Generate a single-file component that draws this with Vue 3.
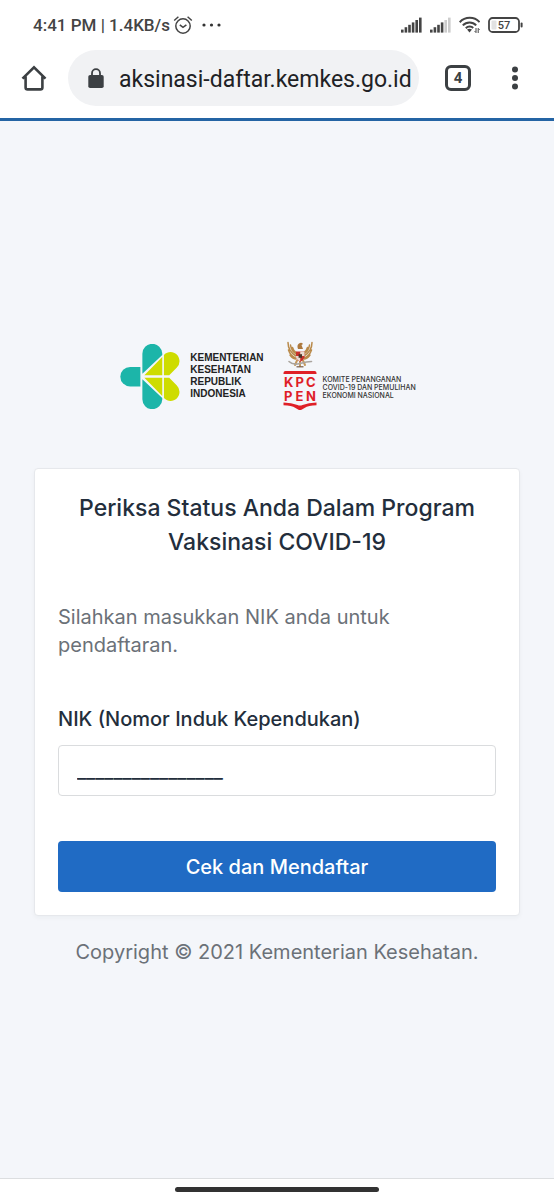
<template>
  <div class="screen">
    <header class="browser">
      <div class="status-bar">
        <div class="status-left">
          <span class="clock">4:41 PM | 1.4KB/s</span>
          <svg width="20" height="20" viewBox="0 0 20 20" fill="none" stroke="#444" stroke-width="1.5">
            <circle cx="10" cy="11" r="7.2" />
            <path d="M1.2 5.5 5.4 1.8M18.8 5.5 14.6 1.8M6.8 9.8 10 12.4l3.4-2.6" />
          </svg>
          <svg class="more-dots" width="20" height="4" viewBox="0 0 20 4" fill="#333">
            <circle cx="2" cy="2" r="1.6" />
            <circle cx="9.5" cy="2" r="1.6" />
            <circle cx="17" cy="2" r="1.6" />
          </svg>
        </div>
        <div class="status-right">
          <svg v-for="(level, index) in signals" :key="index" width="21" height="16" viewBox="0 0 21 16">
            <rect
              v-for="n in 6"
              :key="n"
              :x="(n - 1) * 3.6"
              :y="15 - n * 2.4"
              width="2.6"
              :height="n * 2.4 + 0.6"
              :fill="n <= level ? '#444' : '#ccc'"
            />
          </svg>
          <svg width="21" height="18" viewBox="0 0 21 18" fill="none" stroke="#444" stroke-width="2">
            <path d="M.7 6.2C6.2.4 15.4.4 20.6 6.2M3.8 9.4c3.8-4 9.8-4 13.4 0M6.8 12.3c2.1-2.2 5.6-2.2 7.4-.3" />
            <path d="M8 13.6q2.5-1.6 5 0L10.5 16.6Z" fill="#444" stroke="none" />
            <path d="M17 12v4.6l-1.4-1.5M19.2 17v-4.6l1.4 1.5" stroke-width="1" />
          </svg>
          <svg width="35" height="16" viewBox="0 0 35 16">
            <rect x="1" y="1" width="30" height="14" rx="3.6" fill="none" stroke="#444" stroke-width="1.8" />
            <rect x="3.5" y="3.5" width="5" height="9" rx="1" fill="#e2e2e2" />
            <rect x="32.6" y="5.5" width="2" height="5" rx="1" fill="#444" />
            <text x="16" y="12" text-anchor="middle" class="battery-text">57</text>
          </svg>
        </div>
      </div>
      <div class="toolbar">
        <button type="button" class="icon-btn" aria-label="Home">
          <svg width="26" height="26" viewBox="0 0 26 26" fill="none" stroke="#3c4043" stroke-width="2.6">
            <path d="M1.5 13.6 13 2.4l11.5 11.2M4.6 11.4v11q0 2 2 2h12.8q2 0 2-2v-11" />
          </svg>
        </button>
        <div class="address">
          <svg width="16" height="20" viewBox="0 0 16 20">
            <path d="M4 8V5.2a4 4 0 0 1 8 0V8" fill="none" stroke="#3c4043" stroke-width="1.8" />
            <rect x="0.3" y="7" width="15.4" height="13" rx="1.8" fill="#3c4043" />
          </svg>
          <input v-model="url" type="text" aria-label="Alamat situs">
        </div>
        <button type="button" class="icon-btn tabs" aria-label="Tab">4</button>
        <button type="button" class="icon-btn menu" aria-label="Menu">
          <svg width="6" height="24" viewBox="0 0 6 24" fill="#3c4043">
            <circle cx="3" cy="3.5" r="3" />
            <circle cx="3" cy="12" r="3" />
            <circle cx="3" cy="20.5" r="3" />
          </svg>
        </button>
      </div>
    </header>

    <main class="page">
      <div class="logos">
        <div class="logo">
          <svg width="60" height="65" viewBox="28 29 180 196">
            <path d="M89 98H58a29.5 29.5 0 0 0 0 59h31Z" fill="#1cb5a9" />
            <path d="M95 119V59a30 30 0 0 1 60-1v4Z" fill="#1cb5a9" />
            <path d="M95 135v60a30 30 0 0 0 60 1v-4Z" fill="#1cb5a9" />
            <path d="M155 68v55h-54ZM160 62C178 44 207 56 207 81q0 11-8 19l-23 23h-16Z" fill="#cedc00" />
            <path d="M155 186v-55h-54ZM160 192c18 18 47 6 47-19q0-11-8-19l-23-23h-16Z" fill="#cedc00" />
          </svg>
          <div class="kemkes-text">KEMENTERIAN<br>KESEHATAN<br>REPUBLIK<br>INDONESIA</div>
        </div>
        <div class="logo">
          <svg width="34" height="70" viewBox="0 0 34 70">
            <g fill="none" stroke-linecap="round">
              <path d="M5 1.5Q5 10 13 15M7.5 4q1 7 6 9M9.5 6.5q1 4 4 5.5M5.5 9q2 6 7 8M7 14q3 4 6 4" stroke="#b98a4a" stroke-width="1.5" />
              <path d="M29 1.5Q29 10 21 15M26.5 4q-1 7-6 9M24.5 6.5q-1 4-4 5.5M28.5 9q-2 6-7 8M27 14q-3 4-6 4" stroke="#b98a4a" stroke-width="1.5" />
              <path d="M14 19.5 12 24M17 20v5M20 19.5 22 24" stroke="#c69a5c" stroke-width="2" />
              <path d="M6 20.5Q10 24.5 17 22.5T28.5 20.5" stroke="#aaa49e" stroke-width="1.6" />
            </g>
            <path d="M15 8q-1.5-4 1-5.5t4 .5l-1.5 1L20 8Z" fill="#ad793e" />
            <path d="M13 10.5h8.5v6q-1 3-4.25 4.5Q14 19.5 13 16.5Z" fill="#c8312b" />
            <path d="M17.25 10.5h4.25V15h-4.25ZM13 15h4.25v5.5Q14 19 13 16.5Z" fill="#eadbd0" />
            <rect x="15.6" y="13.2" width="3.4" height="3.6" fill="#4b3328" />
            <path d="M13.5 25.8h7" stroke="#775b45" stroke-width="1.2" />
            <path d="M.5 33v-1q0-2 2-2h29q2 0 2 2v1Z" fill="#df2027" />
            <text x="1 12.5 23" y="45.5" class="kpc">KPC</text>
            <text x="1 12.5 23" y="59.5" class="kpc">PEN</text>
            <path d="M.5 61.5q8 .2 14 2.5 2.5 1 5 0 6-2.3 14-2.5v2.800q-8 .2-12 2.600l-3 1.800q-1.500.7-3 0l-3-1.800q-4-2.400-12-2.600Z" fill="#df2027" />
          </svg>
          <div class="kpc-text">KOMITE PENANGANAN<br>COVID-19 DAN PEMULIHAN<br>EKONOMI NASIONAL</div>
        </div>
      </div>

      <form class="card" @submit.prevent="handleSubmit">
        <h1>Periksa Status Anda Dalam Program Vaksinasi COVID-19</h1>
        <p class="intro">Silahkan masukkan NIK anda untuk pendaftaran.</p>
        <div class="form-group">
          <label for="nik">NIK (Nomor Induk Kependukan)</label>
          <input id="nik" v-model="nik" type="text" inputmode="numeric">
        </div>
        <button type="submit" class="btn-primary">Cek dan Mendaftar</button>
      </form>

      <p class="copyright">Copyright © 2021 Kementerian Kesehatan.</p>
    </main>

    <div class="gesture-bar">
      <span></span>
    </div>
  </div>
</template>

<script setup>
import { ref } from 'vue'

const url = ref('aksinasi-daftar.kemkes.go.id')
const nik = ref('________________')

// jumlah bar sinyal yang aktif untuk tiap SIM
const signals = [6, 4]

const handleSubmit = () => {
  nik.value = nik.value.trim()
}
</script>

<style>
body {
  margin: 0;
}
</style>

<style scoped>
.screen {
  display: flex;
  flex-direction: column;
  min-height: 100vh;
  background: #f4f6fa;
  font-family: Inter, "Liberation Sans", sans-serif;
  color: #232e3c;
}

svg {
  display: block;
  flex-shrink: 0;
}

.browser {
  background: #fff;
  border-bottom: 3px solid #2464a4;
  font-family: Roboto, "Liberation Sans", sans-serif;
}

.status-bar {
  display: flex;
  justify-content: space-between;
  align-items: center;
  height: 50px;
  padding: 0 31px 0 33px;
}

.status-left,
.status-right {
  display: flex;
  align-items: center;
}

.status-left {
  gap: 3px;
}

.status-right {
  gap: 8px;
}

.clock {
  font-size: 17px;
  font-weight: 500;
  color: #444;
  white-space: nowrap;
}

.more-dots {
  margin-left: 6px;
}

.battery-text {
  font-size: 11px;
  font-weight: 500;
  fill: #444;
}

.toolbar {
  display: flex;
  align-items: center;
  padding: 0 36px 12px 21px;
}

.icon-btn {
  padding: 0;
  border: none;
  background: none;
  cursor: pointer;
}

.address {
  display: flex;
  flex: 1;
  align-items: center;
  gap: 15px;
  min-width: 0;
  height: 56px;
  margin: 0 26px 0 21px;
  padding: 0 4px 0 20px;
  box-sizing: border-box;
  border-radius: 28px;
  background: #f1f2f4;
}

.address input {
  flex: 1;
  min-width: 0;
  padding: 2px 0 0;
  border: none;
  outline: none;
  background: none;
  font-family: inherit;
  font-size: 23px;
  color: #202124;
}

.icon-btn.tabs {
  width: 26px;
  height: 26px;
  box-sizing: border-box;
  border: 3px solid #3c4043;
  border-radius: 6px;
  font-family: inherit;
  font-size: 15px;
  font-weight: 700;
  line-height: 20px;
  color: #3c4043;
}

.menu {
  margin-left: 41px;
}

.page {
  display: flex;
  flex: 1;
  flex-direction: column;
  justify-content: center;
  padding: 12px 34px 0;
}

.logos {
  display: flex;
  justify-content: center;
  align-items: center;
  gap: 19px;
  margin-bottom: 57px;
  padding-right: 18px;
}

.logo {
  display: flex;
  align-items: center;
}

.kemkes-text {
  margin-left: 10px;
  font-family: "Liberation Sans", sans-serif;
  font-size: 10px;
  font-weight: 700;
  line-height: 12px;
  color: #222;
}

.kpc {
  font-family: Inter, sans-serif;
  font-size: 13px;
  font-weight: 700;
  fill: #df2027;
}

.kpc-text {
  margin-left: 6px;
  padding-top: 24px;
  font-size: 7px;
  font-weight: 500;
  line-height: 8px;
  color: #333;
  white-space: nowrap;
}

.card {
  padding: 22px 23px 23px;
  border: 1px solid #e6e8ec;
  border-radius: 4px;
  background: #fff;
  box-shadow: 0 2px 4px rgba(35, 46, 60, 0.04);
}

.card h1 {
  margin: 0 0 44px;
  font-size: 23px;
  font-weight: 500;
  line-height: 34px;
  text-align: center;
}

.intro {
  margin: 0 0 46px;
  font-size: 20px;
  line-height: 28px;
  color: #6b7178;
}

.form-group {
  margin-bottom: 45px;
}

.form-group label {
  display: block;
  margin-bottom: 12px;
  font-size: 20px;
  font-weight: 500;
  line-height: 28px;
}

.form-group input {
  display: block;
  width: 100%;
  height: 51px;
  padding: 0 18px;
  box-sizing: border-box;
  border: 1px solid #dadcde;
  border-radius: 4px;
  background: #fff;
  font-family: inherit;
  font-size: 20px;
  color: #232e3c;
}

.btn-primary {
  display: block;
  width: 100%;
  height: 51px;
  border: none;
  border-radius: 4px;
  background: #206bc4;
  font-family: inherit;
  font-size: 20px;
  font-weight: 500;
  color: #fff;
  cursor: pointer;
}

.copyright {
  margin: 22px 0 4px;
  font-size: 20px;
  line-height: 28px;
  text-align: center;
  color: #6b7178;
}

.gesture-bar {
  display: flex;
  justify-content: center;
  align-items: center;
  height: 21px;
  border-top: 1px solid #dcdee0;
  background: #fff;
}

.gesture-bar span {
  width: 37%;
  height: 5px;
  border-radius: 3px;
  background: #333;
}
</style>
